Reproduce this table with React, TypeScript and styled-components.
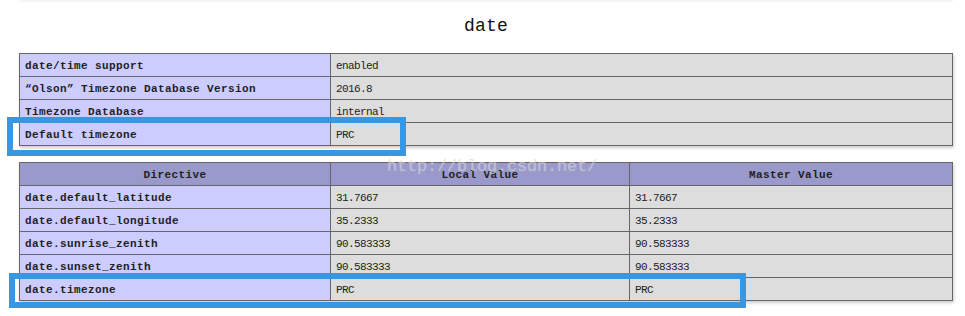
import React from 'react';
import styled, { createGlobalStyle } from 'styled-components';

const GlobalStyle = createGlobalStyle`
    body {
        margin: 0;
        background: #fff;
        color: #222;
        font-family: 'Liberation Mono', 'DejaVu Sans Mono', monospace;
    }
`;

const Page = styled.div`
    position: relative;
    width: 965px;
    height: 316px;
    padding-left: 19px;
    box-sizing: border-box;
    overflow: hidden;
`;

/* хвост тени от предыдущей таблицы */
const PrevShadow = styled.div`
    width: 934px;
    height: 1px;
    background: #f4f4f4;
    box-shadow: 0 1px 2px #eee;
`;

const Title = styled.h2`
    width: 934px;
    margin: 14px 0 16px 0;
    font-size: 18px;
    line-height: 22px;
    font-weight: normal;
    letter-spacing: 0.2px;
    text-align: center;
    color: #111;
`;

const Table = styled.table<{ $gap?: number }>`
    border-collapse: collapse;
    table-layout: fixed;
    width: 934px;
    margin-top: ${(p) => p.$gap ?? 0}px;
    box-shadow: 1px 2px 3px #ccc;
`;

const Cell = styled.td`
    border: 1px solid #666;
    padding: 5px 5px 3px 5px;
    height: 14px;
    font-size: 11px;
    line-height: 14px;
    vertical-align: top;
    white-space: nowrap;
    overflow: hidden;
`;

const Key = styled(Cell)`
    background: #ccf;
    font-weight: bold;
    letter-spacing: 0.4px;
`;

const Value = styled(Cell)`
    background: #ddd;
    letter-spacing: -0.6px;
`;

const Head = styled.th`
    border: 1px solid #666;
    padding: 5px 5px 3px 5px;
    height: 14px;
    background: #99c;
    font-size: 11px;
    line-height: 14px;
    font-weight: bold;
    letter-spacing: 0.4px;
    text-align: center;
    vertical-align: top;
`;

/* синие рамки поверх строк */
const Mark = styled.div<{ $x: number; $y: number; $w: number; $h: number }>`
    position: absolute;
    left: ${(p) => p.$x}px;
    top: ${(p) => p.$y}px;
    width: ${(p) => p.$w}px;
    height: ${(p) => p.$h}px;
    border: 6px solid #3996e0;
    box-sizing: border-box;
    pointer-events: none;
`;

const Watermark = styled.div`
    position: absolute;
    left: 387px;
    top: 157px;
    font-family: 'Liberation Mono', monospace;
    font-size: 17px;
    line-height: 20px;
    letter-spacing: -0.2px;
    color: rgba(180, 180, 180, 0.35);
    text-shadow: 0 0 1px rgba(255, 255, 255, 0.5);
    pointer-events: none;
`;

const info: [string, string][] = [
    ['date/time support', 'enabled'],
    ['\u201COlson\u201D Timezone Database Version', '2016.8'],
    ['Timezone Database', 'internal'],
    ['Default timezone', 'PRC'],
];

const directives: [string, string, string][] = [
    ['date.default_latitude', '31.7667', '31.7667'],
    ['date.default_longitude', '35.2333', '35.2333'],
    ['date.sunrise_zenith', '90.583333', '90.583333'],
    ['date.sunset_zenith', '90.583333', '90.583333'],
    ['date.timezone', 'PRC', 'PRC'],
];

const App: React.FC = () => {
    return (
        <Page>
            <GlobalStyle />
            <PrevShadow />
            <Title>date</Title>

            <Table>
                <colgroup>
                    <col style={{ width: '311px' }} />
                    <col />
                </colgroup>
                <tbody>
                    {info.map(([k, v]) => (
                        <tr key={k}>
                            <Key>{k}</Key>
                            <Value>{v}</Value>
                        </tr>
                    ))}
                </tbody>
            </Table>

            <Table $gap={16}>
                <colgroup>
                    <col style={{ width: '311px' }} />
                    <col style={{ width: '299px' }} />
                    <col />
                </colgroup>
                <tbody>
                    <tr>
                        <Head>Directive</Head>
                        <Head>Local Value</Head>
                        <Head>Master Value</Head>
                    </tr>
                    {directives.map(([name, local, master]) => (
                        <tr key={name}>
                            <Key>{name}</Key>
                            <Value>{local}</Value>
                            <Value>{master}</Value>
                        </tr>
                    ))}
                </tbody>
            </Table>

            <Watermark>http://blog.csdn.net/</Watermark>
            <Mark $x={7} $y={117} $w={399} $h={39} />
            <Mark $x={9} $y={273} $w={737} $h={35} />
        </Page>
    );
};

export default App;
